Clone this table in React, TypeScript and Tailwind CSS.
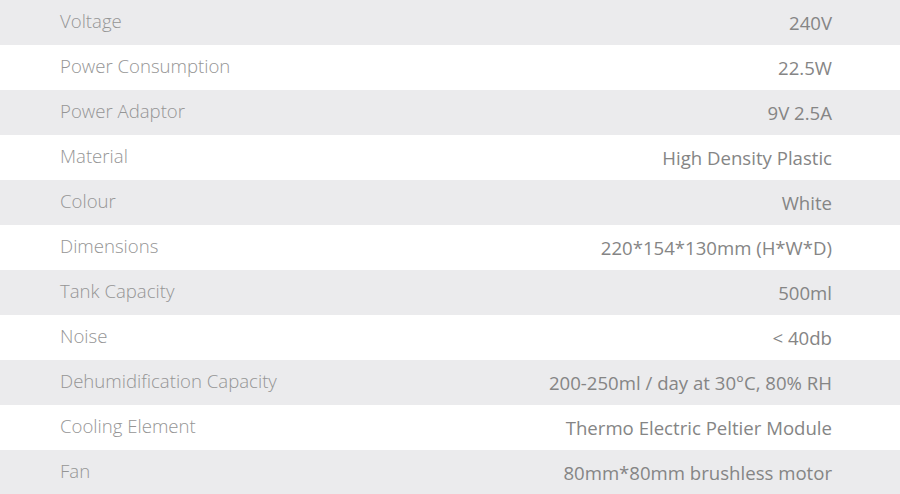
const specs: [string, string][] = [
  ['Voltage', '240V'],
  ['Power Consumption', '22.5W'],
  ['Power Adaptor', '9V 2.5A'],
  ['Material', 'High Density Plastic'],
  ['Colour', 'White'],
  ['Dimensions', '220*154*130mm (H*W*D)'],
  ['Tank Capacity', '500ml'],
  ['Noise', '< 40db'],
  ['Dehumidification Capacity', '200-250ml / day at 30°C, 80% RH'],
  ['Cooling Element', 'Thermo Electric Peltier Module'],
  ['Fan', '80mm*80mm brushless motor'],
];

export default function App() {
  return (
    <div className="w-[900px] h-[494px] overflow-hidden bg-white font-['Open_Sans',sans-serif]">
      {specs.map(([label, value], i) => (
        <div
          key={label}
          className={
            'flex h-[45px] items-center justify-between pl-[60px] pr-[68px] text-[18.6px] ' +
            (i % 2 === 0 ? 'bg-[#ebebed]' : 'bg-white')
          }
        >
          <span className="font-light text-[#959595] pb-[3px]">{label}</span>
          <span className="font-normal text-[#858585]">{value}</span>
        </div>
      ))}
    </div>
  );
}
